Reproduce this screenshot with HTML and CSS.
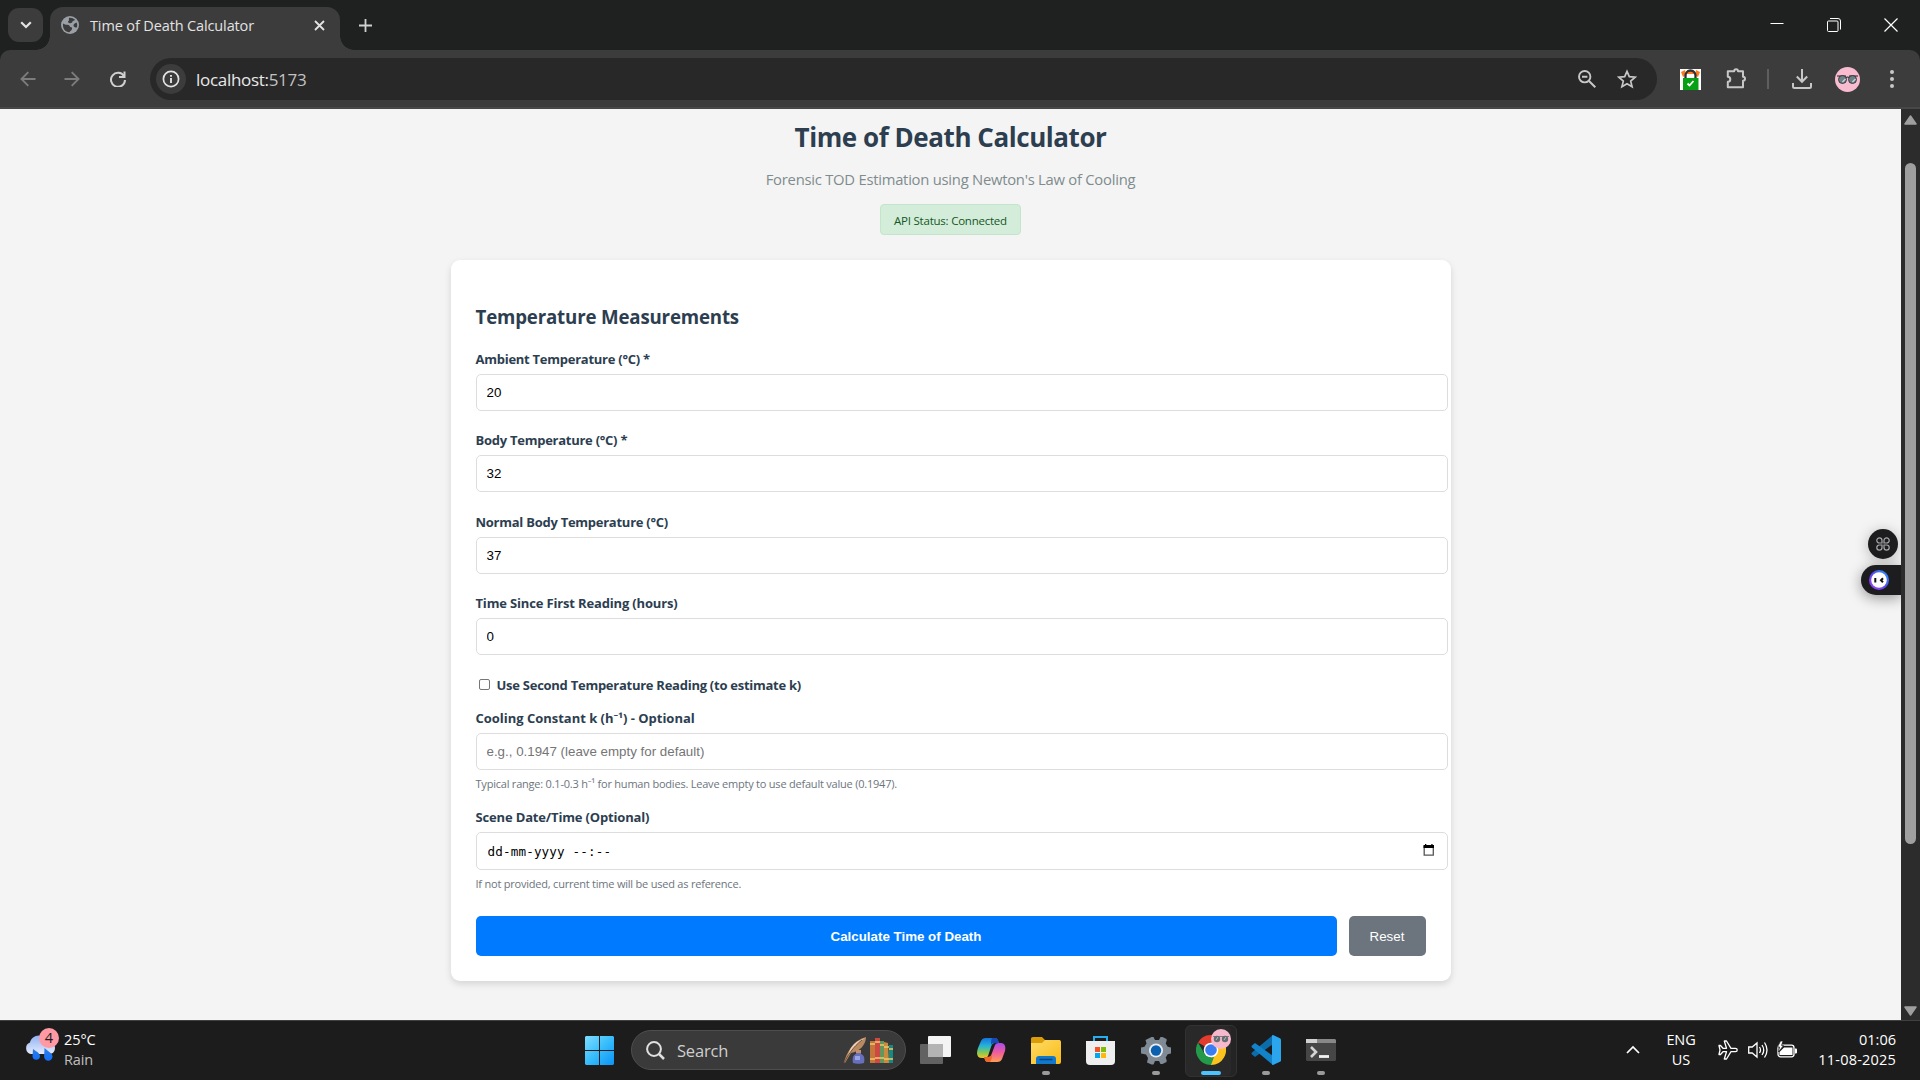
FILE: index.html
```html
<!DOCTYPE html>
<html lang="en">
<head>
<meta charset="utf-8">
<title>Time of Death Calculator</title>
<link rel="stylesheet" href="styles.css">
</head>
<body>
<div class="screen">
  <header class="tabstrip">
    <div class="tab-search"><svg width="12" height="8" viewBox="0 0 12 8"><path d="M1.2 1.2 6 6l4.800-4.800" fill="none" stroke="#e3e3e3" stroke-width="2.200"/></svg></div>
    <div class="tab">
      <svg class="globe" width="18" height="18" viewBox="0 0 18 18"><circle cx="9" cy="9" r="9" fill="#9aa0a6"/><path d="M2 7.500c2 1.500 4 1.200 5.500 1.500 1.500.4 1 2.200 2.600 2.300 1.400.2 1.200 1.500.6 2.400-.6 1-1.900 1.200-2 2.500C4 16 1.500 12.500 2 7.500zM8 2c1-.6 4.500 0 6 1.800-.6 1.200-2.500.8-2.600 2-.2 1.200-1.500 1.600-2.700 1.400C7 7 6.500 5.500 7.500 5 8.500 4.400 7.500 3 8 2zM15.500 6.500c1 1.500.9 3.500.3 5-1.300.2-3.200-.5-3.300-2 0-1.400 1.500-2.500 3-3z" fill="#3c3c3c"/></svg>
      <span class="tab-title">Time of Death Calculator</span>
      <svg class="tab-close" width="11" height="11" viewBox="0 0 11 11"><path d="M1 1l9 9M10 1l-9 9" stroke="#e3e3e3" stroke-width="1.800"/></svg>
    </div>
    <svg class="new-tab" width="13" height="13" viewBox="0 0 13 13"><path d="M6.500 0v13M0 6.500h13" stroke="#d0d0d0" stroke-width="1.800"/></svg>
    <div class="window-controls">
      <svg width="14" height="14" viewBox="0 0 14 14"><path d="M.5 5.500h13" stroke="#fff"/></svg>
      <svg width="14" height="14" viewBox="0 0 14 14" fill="none" stroke="#fff"><rect x=".5" y="3" width="10.500" height="10.500" rx="1"/><path d="M3 .5h8a2.500 2.500 0 0 1 2.500 2.500v8.500"/></svg>
      <svg width="14" height="14" viewBox="0 0 14 14"><path d="M.5.5l13 13M13.500.5l-13 13" stroke="#fff" stroke-width="1.200"/></svg>
    </div>
  </header>

  <nav class="toolbar">
    <div class="tool nav-tool"><svg width="16" height="16" viewBox="0 0 16 16" fill="none" stroke="#7c7c7c" stroke-width="1.900"><path d="M15.500 8H2M8.300 1.200 1.500 8l6.800 6.800"/></svg></div>
    <div class="tool nav-tool"><svg width="16" height="16" viewBox="0 0 16 16" fill="none" stroke="#7c7c7c" stroke-width="1.900"><path d="M.5 8H14M7.700 1.200 14.500 8l-6.800 6.800"/></svg></div>
    <div class="tool reload-tool"><svg width="16" height="16" viewBox="0 0 16 16"><path d="M14 5.200A7 7 0 1 0 15 9" fill="none" stroke="#d0d0d0" stroke-width="2"/><path d="M15.500.5v6.500H9V5h4.500V.5z" fill="#d0d0d0"/></svg></div>
    <div class="omnibox">
      <div class="site-info"><svg width="18" height="18" viewBox="0 0 18 18"><circle cx="9" cy="9" r="7.600" fill="none" stroke="#e3e3e3" stroke-width="1.700"/><path d="M9 8v5M9 5v1.800" stroke="#e3e3e3" stroke-width="1.900"/></svg></div>
      <div class="url">localhost:<span class="port">5173</span></div>
      <svg class="magnifier" width="18" height="18" viewBox="0 0 18 18" fill="none" stroke="#c7c7c7"><circle cx="6.700" cy="6.700" r="5.700" stroke-width="1.900"/><path d="M4 6.700h5.400M11 11l6.300 6.300" stroke-width="2"/></svg>
      <svg width="20" height="20" viewBox="0 0 20 20"><path d="M10 2.300l2.300 5.400 5.900.5-4.500 3.900 1.400 5.700L10 14.800l-5.100 3 1.400-5.700-4.500-3.900 5.900-.5z" fill="none" stroke="#c7c7c7" stroke-width="1.700"/></svg>
    </div>
    <div class="tool lock-tool"><svg width="21" height="21" viewBox="0 0 21 21"><path d="M0 0h21v21H0z" fill="#fff"/><path d="M1 3l4-2 1 5-3 2zM20 3l-4-2-1 5 3 2zM7 1h7v4H7z" fill="#ff7a1c"/><path d="M5.500 10V6.500a5 5 0 0 1 10 0V10" fill="none" stroke="#2b3136" stroke-width="2.300"/><path d="M3 9h15.500v12H3z" fill="#05a014"/><path d="M7.500 14.500l2 2 4-4.500" fill="none" stroke="#fff" stroke-width="1.800"/></svg></div>
    <div class="tool puzzle-tool"><svg width="22" height="22" viewBox="0 0 22 22"><path d="M2.800 3.200h5.400a1.900 1.900 0 0 1 3.800 0h5v5.600a2 2 0 0 1 0 4v6.400H1.800v-5.500a2.500 2.500 0 0 0 0-5V3.200z" fill="none" stroke="#c7c7c7" stroke-width="2" stroke-linejoin="round"/></svg></div>
    <div class="tool divider-tool"><i></i></div>
    <div class="tool download-tool"><svg width="20" height="20" viewBox="0 0 20 20" fill="none" stroke="#c7c7c7" stroke-width="2"><path d="M10 0v12.500M4.800 7.500l5.200 5.300 5.200-5.300M1 14v3.500a1.500 1.500 0 0 0 1.500 1.500h15a1.500 1.500 0 0 0 1.500-1.500V14"/></svg></div>
    <div class="tool avatar-tool"><svg width="25" height="25" viewBox="0 0 25 25"><circle cx="12.500" cy="12.500" r="12.500" fill="#f8bbd0"/><path d="M2 9h9M14 9h9M11 10.500q1.500-1 3 0" stroke="#222" fill="none" stroke-width="1.200"/><circle cx="7.500" cy="12.500" r="4" fill="#6d7f86" stroke="#2a2a2a" stroke-width=".8"/><circle cx="17.500" cy="12.500" r="4" fill="#6d7f86" stroke="#2a2a2a" stroke-width=".8"/><path d="M7.500 15l3-3M17.500 15l3-3" stroke="#c3d0d3" stroke-width="1.500"/></svg></div>
    <div class="tool menu-tool"><svg width="6" height="20" viewBox="0 0 6 20" fill="#c7c7c7"><circle cx="3" cy="3" r="2"/><circle cx="3" cy="10" r="2"/><circle cx="3" cy="17" r="2"/></svg></div>
  </nav>

  <div class="viewport">
    <main class="page">
      <h1>Time of Death Calculator</h1>
      <p class="subtitle">Forensic TOD Estimation using Newton's Law of Cooling</p>
      <div class="api-status">API Status: Connected</div>
      <form class="card">
        <h2>Temperature Measurements</h2>
        <div class="group"><label>Ambient Temperature (°C) *</label><input class="field" type="text" value="20"></div>
        <div class="group"><label>Body Temperature (°C) *</label><input class="field" type="text" value="32"></div>
        <div class="group"><label>Normal Body Temperature (°C)</label><input class="field" type="text" value="37"></div>
        <div class="group"><label class="snug">Time Since First Reading (hours)</label><input class="field" type="text" value="0"></div>
        <label class="check-row"><input class="check" type="checkbox"><span>Use Second Temperature Reading (to estimate k)</span></label>
        <div class="hint-group"><label class="wide">Cooling Constant k (h⁻¹) - Optional</label><input class="field" type="text" placeholder="e.g., 0.1947 (leave empty for default)"><small>Typical range: 0.1-0.3 h⁻¹ for human bodies. Leave empty to use default value (0.1947).</small></div>
        <div class="hint-group"><label class="snug">Scene Date/Time (Optional)</label>
          <div class="field date-field"><span>dd-mm-yyyy --:--</span><svg width="12" height="12" viewBox="0 0 12 12"><path d="M1.200 2v9.200h9.100V2" fill="none" stroke="#555" stroke-width="1.300"/><path d="M.5 1H2V0h1.300v1h5V0h1.300v1H11v3H.5z"/></svg></div>
          <small>If not provided, current time will be used as reference.</small></div>
        <div class="actions"><button class="primary" type="button">Calculate Time of Death</button><button class="secondary" type="button">Reset</button></div>
      </form>
      <div class="float-apps"><svg width="14" height="14" viewBox="0 0 14 14" fill="none" stroke="#a9a9ad" stroke-width="1.200"><path d="M6 6H3.400A2.600 2.600 0 1 1 6 3.400zM8 6h2.600A2.600 2.600 0 1 0 8 3.400zM6 8H3.400A2.600 2.600 0 1 0 6 10.600zM8 8h2.600A2.600 2.600 0 1 1 8 10.600z"/></svg></div>
      <div class="float-bot"><svg width="20" height="20" viewBox="0 0 20 20"><defs><linearGradient id="ring" x1="0" x2="1" y1="1" y2="0"><stop offset="0" stop-color="#b43cf0"/><stop offset=".5" stop-color="#554cf0"/><stop offset="1" stop-color="#23a3ff"/></linearGradient></defs><circle cx="10" cy="10" r="10" fill="url(#ring)"/><circle cx="10" cy="10" r="7.800" fill="#fff"/><path d="M6.300 8v4.400M14 8.200l-2 2 2 2" stroke="#111" stroke-width="2" fill="none"/></svg></div>
    </main>
    <div class="scrollbar">
      <svg width="13" height="10" viewBox="0 0 13 10"><path d="M6.500 1 12 9H1z" fill="#9f9f9f" stroke="#9f9f9f" stroke-width="1.500" stroke-linejoin="round"/></svg>
      <div class="thumb"></div>
      <svg class="down" width="13" height="10" viewBox="0 0 13 10"><path d="M6.500 9 1 1h11z" fill="#9f9f9f" stroke="#9f9f9f" stroke-width="1.500" stroke-linejoin="round"/></svg>
    </div>
  </div>

  <footer class="taskbar">
    <div class="weather">
      <svg width="36" height="38" viewBox="0 0 36 38"><defs><linearGradient id="cloud" x2="0" y2="1"><stop stop-color="#8eb2f5"/><stop offset="1" stop-color="#e6ebfb"/></linearGradient><linearGradient id="drop" x2="0" y2="1"><stop stop-color="#2f7de0"/><stop offset="1" stop-color="#1170ff"/></linearGradient></defs><path d="M6 29a6 6 0 0 1-1-11.500C6 13 10 10 15 10.500c6 0 8 3 9 6.500 4 0 6 3 6 6s-2 6-6 6z" fill="url(#cloud)"/><path d="M8 24c4 3 7 4 7 7.500a3.800 3.800 0 0 1-7.500 0zM19.500 23c4 4 8 5 8 8.500a4.200 4.200 0 0 1-8.400 0z" fill="url(#drop)"/></svg>
      <span class="badge">4</span>
      <div class="weather-text"><div>25°C</div><div class="dim">Rain</div></div>
    </div>
    <svg class="start" width="29" height="29" viewBox="0 0 29 29"><defs><linearGradient id="win" x2="1" y2="1"><stop stop-color="#7fdcff"/><stop offset=".5" stop-color="#38bdfb"/><stop offset="1" stop-color="#0a93f8"/></linearGradient></defs><path d="M1 0h13v14H0V1zM15 0h13l1 1v13H15zM0 15h14v14H1l-1-1zM15 15h14v13l-1 1H15z" fill="url(#win)"/></svg>
    <div class="search">
      <svg width="19" height="19" viewBox="0 0 19 19" fill="none" stroke="#e0e0e0"><circle cx="8" cy="8" r="6.900" stroke-width="2"/><path d="M13 13l5 5" stroke-width="2.500"/></svg>
      <span>Search</span>
      <svg width="51" height="29" viewBox="0 0 51 29"><path d="M1 26C4 17 9 5 23 1c0 8-7 15-15 16L2 27z" fill="#b98962"/><path d="M4 22C9 13 14 7 22 2c-5 2-12 4-16 14z" fill="#ecd0b4"/><path d="M1 27C5 19 10 11 19 4" stroke="#78533d" fill="none"/><path d="M13 14h5v4c3 1 4 4 3 9-3 1-8 1-11 0-1-5 0-8 3-9z" fill="#6870bd"/><path d="M13 14h5v3h-5z" fill="#c69169"/><path d="M12 20h5v4h-5z" fill="#9ba5e6"/><path d="M27 5h5v22h-5z" fill="#c5763a"/><path d="M32 2h5v25h-5z" fill="#cf4944"/><path d="M37 5h4v22h-4z" fill="#62965a"/><path d="M41 6l4 1 1 20h-5z" fill="#c98b3e"/><path d="M46 9h4v18h-4z" fill="#168a80"/><path d="M27 8h5M27 23h5M32 6h5M32 22h5M37 9h4M37 22h4M41 11h5M41 23h5M46 13h4M46 23h4" stroke="#f0ca69" stroke-width="1.300"/></svg>
    </div>
    <div class="apps">
      <div class="app"><svg width="31" height="28" viewBox="0 0 31 28"><rect y="8" width="23" height="20" rx="1" fill="#626262"/><rect x="8" width="23" height="21" rx="1" fill="#f4f4f4"/><path d="M8 8h15v13H8z" fill="#b3b3b3"/></svg></div>
      <div class="app copilot"><svg width="29" height="26" viewBox="0 0 29 26"><defs><linearGradient id="ca" x2="0" y2="1"><stop stop-color="#1674df"/><stop offset=".4" stop-color="#25b4d8"/><stop offset=".75" stop-color="#8ccb4b"/><stop offset="1" stop-color="#f2c32c"/></linearGradient><linearGradient id="cb" x2="0" y2="1"><stop stop-color="#a84cf0"/><stop offset=".5" stop-color="#ef5d9b"/><stop offset="1" stop-color="#ff9c55"/></linearGradient></defs><path d="M9 1h9c3 0 3 3 4 5h-4c-2 0-3 1-4 4l-3 9c-1 2-3 2-6 2-5 0-6-4-4-10l3-7C5 2 6 1 9 1z" fill="url(#ca)"/><path d="M15 1h3c3 0 3 3 4 5h-4c-2 0-3 0-4 2 0-3 0-5 1-7z" fill="#174ab8"/><path d="M20 25h-9c-3 0-3-3-4-5h4c2 0 3-1 4-4l3-8c1-2 3-2 6-2 4 0 5 4 4 8l-3 8c-1 2-2 3-5 3z" fill="url(#cb)"/><path d="M13 25h-2c-3 0-3-3-4-5h4c2 0 3-1 4-3 0 3 0 6-2 8z" fill="#f1672b"/></svg></div>
      <div class="app running"><svg width="30" height="27" viewBox="0 0 30 27"><defs><linearGradient id="fo" x2="1" y2="1"><stop stop-color="#ffdc67"/><stop offset="1" stop-color="#f9ba16"/></linearGradient></defs><path d="M0 1.500Q0 0 2 0h9l3 3h15v6H0z" fill="#dc9b08"/><path d="M0 6h11l3-3h14q2 0 2 2v20q0 2-2 2H0z" fill="url(#fo)"/><path d="M5 27v-5q0-3 3-3h14q3 0 3 3v5z" fill="#1278cb"/><path d="M9 22.500h12" stroke="#0b467b" stroke-width="1.300" stroke-linecap="round"/></svg></div>
      <div class="app"><svg width="29" height="29" viewBox="0 0 29 29"><path d="M8 7V1h13v6" fill="none" stroke="#28adef" stroke-width="2"/><path d="M0 5h29v20q0 4-4 4H4q-4 0-4-4z" fill="#efefef"/><path d="M9 11h5v5H9z" fill="#f35325"/><path d="M15 11h5v5h-5z" fill="#81bc06"/><path d="M9 17h5v5H9z" fill="#05a6f0"/><path d="M15 17h5v5h-5z" fill="#ffba08"/></svg></div>
      <div class="app running"><svg width="30" height="29" viewBox="0 0 30 29"><path d="M10.500 1h2l1.500 3h4l1.500-3h2l4 2 .2 1.500-1 3 2 3.300 3.300.7v6l-3.300.8-2 3.300 1 3-.2 1.500-4 2h-2L18 25h-4l-1.500 3.500h-2l-4.500-2 1-4.500-2-3.500L0 17.500v-6l3.500-.7 2-3.300-1-3.500z" fill="#7f8a94"/><circle cx="15" cy="14.500" r="7" fill="#e9edf1"/><circle cx="15" cy="14.500" r="5.200" fill="#0b61b0"/></svg></div>
      <div class="app active">
        <svg width="30" height="30" viewBox="0 0 30 30"><path d="M15 15 2 7.500A15 15 0 0 1 28 7.500H15z" fill="#e33b2e"/><path d="M15 15V7.500h13A15 15 0 0 1 15 30z" fill="#fcc31e"/><path d="M15 30A15 15 0 0 1 2 7.500l6.500 11.300L15 22.500l3-.5z" fill="#239a4a"/><circle cx="15" cy="15" r="7.300" fill="#fff"/><circle cx="15" cy="15" r="5.800" fill="#3b7df0"/></svg>
        <svg class="profile" width="20" height="20" viewBox="0 0 20 20"><circle cx="10" cy="10" r="10" fill="#f5b8cc"/><path d="M2 7.500h16" stroke="#8a7a80"/><circle cx="6" cy="10" r="3.200" fill="#666d70"/><circle cx="14" cy="10" r="3.200" fill="#666d70"/><path d="M5 11l2-3M13 11l2-3" stroke="#b8c0c2"/></svg>
      </div>
      <div class="app running"><svg width="30" height="30" viewBox="0 0 30 30"><path d="M22 0v9L4 22l-3-2.500q-1-1 0-2z" fill="#0b6dac"/><path d="M22 30v-9L4 8 1 10.500q-1 1 0 2z" fill="#1283c9"/><path d="M22 0l7 3.200q1 .5 1 1.500v20.600q0 1-1 1.500L22 30q-1 0-1-1V1q0-1 1-1z" fill="#2aa5ee"/></svg></div>
      <div class="app running"><svg width="30" height="22" viewBox="0 0 30 22"><rect width="30" height="22" rx="1.500" fill="#464646"/><path d="M1.500 0h27Q30 0 30 1.500V4H0V1.500Q0 0 1.500 0z" fill="#888"/><path d="M0 0h11v4H0z" fill="#d2d2d2"/><path d="M5 8l5 5-5 5" fill="none" stroke="#d4d4d4" stroke-width="2.600"/><path d="M13 17.500h10" stroke="#f2f2f2" stroke-width="2.800"/></svg></div>
    </div>
    <div class="tray">
      <svg class="chevron" width="14" height="9" viewBox="0 0 14 9"><path d="M1 8l6-6 6 6" fill="none" stroke="#fff" stroke-width="1.700"/></svg>
      <div class="lang"><div>ENG</div><div>US</div></div>
      <div class="status">
        <svg width="20" height="20" viewBox="0 0 20 20"><path d="M1 5.500h1.500L5 8.300h3.500L6.300 1h2.200l4.500 7.300h4.500a1.700 1.700 0 0 1 0 3.400H13L8.500 19H6.300l2.200-7.300H5L2.500 14.500H1L2 10z" fill="none" stroke="#fff" stroke-width="1.300" stroke-linejoin="round"/></svg>
        <svg width="20" height="18" viewBox="0 0 20 18" fill="none" stroke="#fff" stroke-width="1.300"><path d="M.7 6v6h3.500L9 16V2L4.200 6zM11.500 6q2 3 0 6M14 4q3.500 5 0 10M16.500 1.500q5 7.500 0 15"/></svg>
        <svg class="battery" width="20" height="17" viewBox="0 0 20 17"><rect x="1" y="4.200" width="16" height="11.600" rx="2.500" fill="none" stroke="#fff" stroke-width="1.300"/><path d="M7 6.500h8.500v7.500h-13V11zM18 7.500h1q1 0 1 1v3q0 1-1 1h-1z" fill="#fff"/><path d="M3.500 0 .5 6h2l-1 5 5-6.500h-2L6 0z" fill="#fff" stroke="#1c1c1c" stroke-width=".7"/></svg>
      </div>
      <div class="clock"><div>01:06</div><div class="date">11-08-2025</div></div>
    </div>
  </footer>
</div>
</body>
</html>
```
FILE: styles.css
```css
* { box-sizing: border-box; }
body { margin: 0; font-family: "Open Sans", "Noto Sans", sans-serif; overflow: hidden; }
svg { display: block; flex: none; }
.screen { width: 1920px; height: 1080px; display: flex; flex-direction: column; background: #1f2120; }

/* Browser chrome */
.tabstrip { height: 50px; padding: 7px 0 0 8px; display: flex; background: #1f2120; color: #e3e3e3; }
.tab-search { width: 35px; height: 34px; margin: 1px 7px 0 0; border-radius: 11px; background: #3c3c3c; display: flex; align-items: center; justify-content: center; }
.tab { position: relative; width: 290px; height: 43px; padding: 0 15px 7px 11px; border-radius: 13px 13px 0 0; background: #3c3c3c; display: flex; align-items: center; }
.tab::before, .tab::after { content: ""; position: absolute; bottom: 0; width: 14px; height: 14px; }
.tab::before { left: -14px; background: radial-gradient(circle at 0 0, transparent 13.5px, #3c3c3c 14px); }
.tab::after { right: -14px; background: radial-gradient(circle at 100% 0, transparent 13.5px, #3c3c3c 14px); }
.tab-title { flex: 1; margin-left: 11px; font-size: 14.5px; letter-spacing: -0.13px; white-space: nowrap; }
.new-tab { margin: 12px 0 0 19px; }
.window-controls { margin: 11px 22px 0 auto; display: flex; gap: 43px; }

.toolbar { height: 59px; padding: 1px 1px 0 6px; border-bottom: 2px solid #484848; border-radius: 10px 10px 0 0; background: #3c3c3c; display: flex; align-items: center; }
.tool { height: 42px; display: flex; align-items: center; justify-content: center; flex: none; }
.nav-tool { width: 44px; }
.reload-tool { width: 47px; margin-right: 9px; }
.omnibox { width: 1507px; height: 42px; margin-right: 10px; padding: 0 20px 0 6px; border-radius: 21px; background: #282828; display: flex; align-items: center; }
.site-info { width: 30px; height: 30px; border-radius: 50%; background: #3c3c3c; display: flex; align-items: center; justify-content: center; }
.url { flex: 1; margin-left: 10px; font-size: 17px; letter-spacing: -0.3px; color: #e8e8e8; }
.port { color: #c2c2c2; }
.magnifier { margin-right: 21px; }
.lock-tool { width: 46px; }
.puzzle-tool { width: 48px; }
.divider-tool { width: 14px; }
.divider-tool i { width: 2px; height: 20px; background: #5e5e5e; }
.download-tool { width: 54px; }
.avatar-tool { width: 36px; }
.menu-tool { width: 54px; }

/* Web page */
.viewport { height: 911px; display: flex; }
.page { position: relative; width: 1901px; background: #f4f4f4; color: #2c3e50; display: flex; flex-direction: column; align-items: center; overflow: hidden; }
h1 { margin: 8px 0 0; font-size: 26px; line-height: 40px; letter-spacing: -0.44px; }
.subtitle { margin: 10px 0 0; font-size: 14.8px; line-height: 24px; letter-spacing: -0.25px; color: #7f8c8d; }
.api-status { width: 141px; height: 31px; margin: 13px 0 25px; border: 1px solid #c3e6cb; border-radius: 4px; background: #d4edda; color: #155724; font-size: 11.5px; line-height: 31px; letter-spacing: -0.23px; text-align: center; }
.card { width: 1000px; height: 721px; padding: 42px 25px 25px; border-radius: 9px; background: #fff; box-shadow: 0 3px 7px rgba(0,0,0,.13); }
h2 { margin: 0 0 17px; font-size: 18.7px; line-height: 30px; letter-spacing: -0.18px; }
.group { height: 81.33px; }
label { display: block; height: 20px; margin-bottom: 5px; font-size: 13px; line-height: 20px; font-weight: 700; letter-spacing: -0.26px; white-space: nowrap; }
.snug { letter-spacing: -0.16px; }
.wide { letter-spacing: -0.02px; }
.field { display: block; width: 972px; height: 37px; padding: 0 10px; border: 1px solid #ddd; border-radius: 5px; background: #fff; color: #000; font: 13.33px "Liberation Sans", Arial, sans-serif; outline: none; }
.field::placeholder { color: #757575; opacity: 1; }
.check-row { display: flex; align-items: center; gap: 7px; margin: 1px 0 13px 3px; }
.check { appearance: none; width: 11px; height: 11px; margin: 0 0 1px; border: 1px solid #767676; border-radius: 2px; background: #fff; }
.hint-group { height: 99px; }
small { display: block; margin-top: 6px; font-size: 11px; line-height: 16px; letter-spacing: -0.215px; color: #6c757d; }
.date-field { height: 38px; padding: 0 12px 0 11px; display: flex; align-items: center; justify-content: space-between; font: 12.6px "DejaVu Sans Mono", monospace; letter-spacing: 0.15px; }
.date-field svg { margin-bottom: 2px; }
.actions { display: flex; gap: 12px; margin-top: 10px; }
.actions button { height: 40px; padding: 0; border: 0; border-radius: 5px; color: #fff; font: 13.33px "Liberation Sans", Arial, sans-serif; }
.actions .primary { flex: 1; background: #007bff; font-weight: 700; }
.actions .secondary { width: 77px; background: #6c757d; }

.float-apps { position: absolute; left: 1868px; top: 420px; width: 30px; height: 30px; border-radius: 50%; background: #1d1d1f; box-shadow: 0 2px 14px rgba(0,0,0,.25); display: flex; align-items: center; justify-content: center; }
.float-bot { position: absolute; left: 1861px; top: 456px; width: 40px; height: 30px; padding-left: 8px; border-radius: 15px 0 0 15px; background: #1d1d1f; box-shadow: 0 3px 14px rgba(0,0,0,.4); display: flex; align-items: center; }

.scrollbar { width: 19px; padding: 6px 0 4px; background: #2c2c2c; display: flex; flex-direction: column; align-items: center; }
.thumb { width: 11px; height: 681px; margin-top: 38px; border-radius: 6px; background: #9f9f9f; }
.down { margin-top: auto; }

/* Taskbar */
.taskbar { height: 60px; border-top: 1px solid #414141; background: #1c1c1c; color: #fff; display: flex; font-size: 14.5px; line-height: 20px; }
.weather { position: relative; width: 585px; padding: 4px 0 0 25px; display: flex; }
.badge { position: absolute; left: 39px; top: 7px; width: 20px; height: 20px; border-radius: 50%; background: #ff99a4; color: #1c1c1c; text-align: center; }
.weather-text { margin: 5px 0 0 3px; letter-spacing: -0.1px; }
.dim { color: #c0c0c0; }
.start { margin-top: 15px; }
.search { width: 275px; height: 40px; margin: 9px 2px 0 17px; padding: 0 11px 0 14px; border: 1px solid #4e4e4e; border-radius: 20px; background: #3a3a3a; color: #cfcfcf; display: flex; align-items: center; font-size: 16.5px; letter-spacing: -0.2px; }
.search span { flex: 1; margin: 1px 0 0 12px; }
.apps { display: flex; margin-top: 4px; }
.app { position: relative; width: 55px; height: 50px; display: flex; align-items: center; justify-content: center; }
.copilot { padding-left: 1px; }
.running::after, .active::after { content: ""; position: absolute; bottom: 0; width: 8px; height: 4px; border-radius: 2px; background: #9a9a9a; }
.active::after { width: 20px; background: #4cc2ff; }
.active::before { content: ""; position: absolute; left: 2px; top: 0; width: 50px; height: 50px; border: 1px solid #323232; border-radius: 6px; background: #292929; box-shadow: inset -5px 0 #242424; }
.active svg { position: relative; }
.active .profile { position: absolute; left: 28px; top: 4px; }
.tray { margin-left: auto; padding-right: 24px; display: flex; }
.chevron { margin-top: 24px; }
.lang { width: 60px; margin: 9px 0 0 11px; text-align: center; letter-spacing: -0.1px; }
.status { display: flex; align-items: center; gap: 10px; margin: 0 20px 1px 7px; }
.battery { margin: 0 1px 2px -1px; }
.clock { width: 78px; margin-top: 9px; text-align: right; white-space: nowrap; }
.date { letter-spacing: 0.2px; }
```
